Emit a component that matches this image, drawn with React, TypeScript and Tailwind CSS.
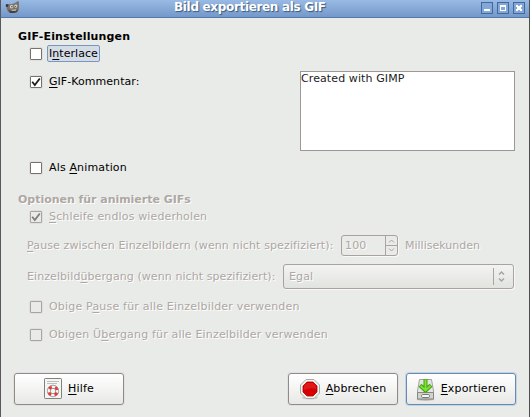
import type { ReactNode } from "react";

function Mnemonic({ children }: { children: ReactNode }) {
  return (
    <span className="underline decoration-1 underline-offset-2 [text-decoration-skip-ink:none]">
      {children}
    </span>
  );
}

function CheckBox({ checked = false, disabled = false }: { checked?: boolean; disabled?: boolean }) {
  return (
    <span
      className={
        "size-3 shrink-0 rounded-[1px] border shadow-[0_0_0_1px_#dfe0dd] " +
        (disabled ? "border-[#aaa3a0] bg-[#e9ebe8]" : "border-[#777170] bg-white")
      }
    >
      {checked && (
        <svg viewBox="0 0 10 10" className="size-2.5" fill="none">
          <path
            d="M1.2 4.8 3.8 8 8.8 1.5"
            stroke={disabled ? "#807b79" : "#1c1c1c"}
            strokeWidth="1.8"
          />
        </svg>
      )}
    </span>
  );
}

function CheckRow({
  checked,
  disabled,
  className,
  children,
}: {
  checked?: boolean;
  disabled?: boolean;
  className: string;
  children: ReactNode;
}) {
  return (
    <label className={"flex items-center gap-[7px] pl-[29px] " + className}>
      <CheckBox checked={checked} disabled={disabled} />
      <span className={disabled ? "text-[#aea7a4] [text-shadow:1px_1px_0_#fff]" : ""}>{children}</span>
    </label>
  );
}

function WindowButton({ children }: { children: ReactNode }) {
  return (
    <button className="size-3 border border-[#41699c] bg-[#83a8d8]">
      <svg viewBox="0 0 10 10" className="size-2.5" shapeRendering="crispEdges">
        {children}
      </svg>
    </button>
  );
}

function MascotIcon() {
  return (
    <svg viewBox="0 0 15 14" className="h-3.5 w-[15px]">
      <path d="M1.2 4 4 4 6 4.3 10 3 12.5 1.2 14 1.5 14 9 12.5 12 9 13H5L2.5 11 1.5 8Z" fill="#77756e" />
      <path d="M3 9.5 6 11H11L13 9 12 12 9 13H5Z" fill="#45423c" />
      <path d="M6.5 10 11 9.3 11 10.6 7.5 11Z" fill="#c9c2b4" />
      <ellipse cx="6.6" cy="6.7" rx="1.7" ry="1.7" fill="#dddcd4" />
      <ellipse cx="10.8" cy="6.1" rx="1.5" ry="1.6" fill="#dddcd4" />
      <circle cx="6.9" cy="6.8" r=".7" fill="#35332e" />
      <circle cx="10.7" cy="6.3" r=".6" fill="#35332e" />
      <circle cx="2" cy="5.6" r="1.3" fill="#35332e" />
    </svg>
  );
}

function HelpIcon() {
  return (
    <svg viewBox="0 0 18 22" className="h-[22px] w-[18px]">
      <rect x=".5" y=".5" width="17" height="20" rx=".7" fill="#f5f6f3" stroke="#80827e" />
      <path d="M3 3.5H15M3 5.5H13" stroke="#bec0bb" />
      <circle cx="9" cy="13" r="4.2" fill="none" stroke="#8a8c88" strokeWidth="3.9" />
      <circle cx="9" cy="13" r="4.2" fill="none" stroke="#f4f4f2" strokeWidth="2.5" />
      <circle
        cx="9"
        cy="13"
        r="4.2"
        fill="none"
        stroke="#e23a3a"
        strokeWidth="2.8"
        strokeDasharray="3.1 3.497"
        strokeDashoffset="-1.75"
      />
    </svg>
  );
}

function StopIcon() {
  return (
    <svg viewBox="0 0 20 21" className="h-[21px] w-5">
      <ellipse cx="10" cy="18.8" rx="8" ry="1.7" fill="#c9cbc7" />
      <path d="M6 .5H14L19.5 6V14L14 19.5H6L.5 14V6Z" fill="#f3f4f1" stroke="#a7aaa4" />
      <path d="M7 3H13L17 7V13L13 17H7L3 13V7Z" fill="#d60000" stroke="#b00000" strokeWidth=".8" />
      <path d="M7 4H13L16 7V10Q10 8 4 11V7Z" fill="#e01a1a" />
    </svg>
  );
}

function SaveIcon() {
  return (
    <svg viewBox="0 0 19 23" className="h-[23px] w-[19px]">
      <ellipse cx="9.5" cy="21.5" rx="9" ry="1.2" fill="#aeb0ab" />
      <path d="M3.5 1.5H15.5L17.5 13V20.5H1.5V13Z" fill="#e3e5e1" stroke="#a0a39d" />
      <path d="M1.5 14.5H17.5V21H1.5Z" fill="#d0d2cd" stroke="#858883" />
      <rect x="5.5" y="16.5" width="8" height="3" rx="1.2" fill="#f6f6f5" stroke="#777a74" />
      <path
        d="M9.5 1V12M4 7.2 9.5 12.5 15 7.2"
        fill="none"
        stroke="#479b10"
        strokeWidth="4"
        strokeLinejoin="round"
      />
      <path d="M9.5 1.5V12M4.5 7.8 9.5 12.4 14.5 7.8" fill="none" stroke="#7be335" strokeWidth="2" />
    </svg>
  );
}

function ActionButton({
  icon,
  primary = false,
  children,
}: {
  icon: ReactNode;
  primary?: boolean;
  children: ReactNode;
}) {
  return (
    <button
      className={
        "flex h-8 w-[110px] items-center justify-center gap-1.5 rounded-[3px] border bg-linear-to-b from-white to-[#e8e9e6] " +
        (primary
          ? "border-[#6689b7] shadow-[0_0_0_1px_#c5d2e3]"
          : "border-[#938989] shadow-[0_0_0_1px_#e0e2df]")
      }
    >
      {icon}
      <span>{children}</span>
    </button>
  );
}

const disabledText = "text-[#aea7a4] [text-shadow:1px_1px_0_#fff]";

export default function App() {
  return (
    <div className="flex h-[417px] w-[530px] flex-col overflow-hidden border-x border-l-[#59585e] border-r-[#4e504f] bg-[#e9ebe8] font-['DejaVu_Sans',sans-serif] text-[11px] leading-[14px] tracking-[0.15px] whitespace-nowrap text-black">
      <header className="flex h-[18px] shrink-0 items-start border-b border-[#5277aa] bg-linear-to-b from-[#99bae4] to-[#7498ca] pl-1">
        <MascotIcon />
        <h1 className="flex-1 pl-[154px] text-[12px] leading-[15px] font-bold tracking-[-0.33px] text-white [text-shadow:1px_1px_1px_#35577f]">
          Bild exportieren als GIF
        </h1>
        <div className="flex gap-1 pt-0.5 pr-1">
          <WindowButton>
            <path d="M2 6H8V8H2Z" fill="white" />
          </WindowButton>
          <WindowButton>
            <path d="M2 2H8V8H2Z M3 4V7H7V4Z" fill="white" fillRule="evenodd" />
          </WindowButton>
          <WindowButton>
            <path d="M2 2H4V3H6V2H8V4H7V6H8V8H6V7H4V8H2V6H3V4H2Z" fill="white" />
          </WindowButton>
        </div>
      </header>

      <main className="flex min-h-0 flex-1 flex-col">
        <h2 className="mt-3 h-[14px] pl-[17px] font-bold">GIF-Einstellungen</h2>
        <label className="mt-[2px] flex h-[15px] items-center gap-[5px] pl-[29px]">
          <CheckBox />
          <span className="flex h-[17px] w-[53px] items-center rounded-[2px] border border-[#7897bf] bg-[#d6dce6] pl-[1px] tracking-[0.05px]">
            <span>I<Mnemonic>n</Mnemonic>terlace</span>
          </span>
        </label>

        <div className="mt-[10px] flex h-20 justify-between pr-[14px]">
          <CheckRow checked className="h-[21px] tracking-[0.05px]">
            <Mnemonic>G</Mnemonic>IF-Kommentar:
          </CheckRow>
          <div className="w-[215px] border border-[#9e9794] bg-white tracking-[0.1px] text-[#222]">
            Created with GIMP
          </div>
        </div>

        <CheckRow className="mt-[9px] h-4">
          Als <Mnemonic>A</Mnemonic>nimation
        </CheckRow>

        <h2 className={"mt-[17px] h-[14px] pl-[17px] font-bold tracking-[-0.03px] " + disabledText}>
          Optionen für animierte GIFs
        </h2>
        <CheckRow checked disabled className="mt-[2px] h-4">
          <Mnemonic>S</Mnemonic>chleife endlos wiederholen
        </CheckRow>

        <div className={"mt-[10px] flex h-[21px] items-center pl-[26px] " + disabledText}>
          <span className="w-[314px] tracking-[0.12px]">
            <Mnemonic>P</Mnemonic>ause zwischen Einzelbildern (wenn nicht spezifiziert):
          </span>
          <div className="flex h-[21px] w-[57px] rounded-[3px] border border-[#aaa2a0] shadow-[1px_1px_0_#f8f9f7]">
            <span className="flex flex-1 items-center pl-[3px]">100</span>
            <svg viewBox="0 0 12 19" className="h-[19px] w-3" fill="none" stroke="#aaa3a0">
              <path d="M.5 0V19M1 9.5H12M4 6.5 6.5 4 9 6.5M4 12.5 6.5 15 9 12.5" />
            </svg>
          </div>
          <span className="ml-[7px] tracking-normal">Millisekunden</span>
        </div>

        <div className={"mt-2 flex h-[25px] items-center pl-[26px] " + disabledText}>
          <span className="w-[256px] tracking-[0.08px]">
            Einzelbild<Mnemonic>ü</Mnemonic>bergang (wenn nicht spezifiziert):
          </span>
          <div className="flex h-[25px] w-[231px] items-center rounded-[3px] border border-[#aaa2a0] bg-linear-to-b from-[#f3f4f2] to-[#e1e3df] pl-[5px] shadow-[1px_1px_0_#f8f9f7]">
            <span className="flex-1">Egal</span>
            <svg viewBox="0 0 20 23" className="h-[23px] w-5" fill="none" stroke="#aaa3a0">
              <path d="M.5 3V20" />
              <path d="M6 9.5 8.5 7 11 9.5M6 13.5 8.5 16 11 13.5" strokeWidth="1.5" />
            </svg>
          </div>
        </div>

        <CheckRow disabled className="mt-[10px] h-4 tracking-[0.19px]">
          Obige P<Mnemonic>a</Mnemonic>use für alle Einzelbilder verwenden
        </CheckRow>
        <CheckRow disabled className="mt-3 h-4 tracking-[0.17px]">
          Obigen Ü<Mnemonic>b</Mnemonic>ergang für alle Einzelbilder verwenden
        </CheckRow>

        <footer className="mt-[30px] flex gap-2 pr-[13px] pl-[13px]">
          <ActionButton icon={<HelpIcon />}>
            <Mnemonic>H</Mnemonic>ilfe
          </ActionButton>
          <div className="flex-1" />
          <ActionButton icon={<StopIcon />}>
            <Mnemonic>A</Mnemonic>bbrechen
          </ActionButton>
          <ActionButton primary icon={<SaveIcon />}>
            <Mnemonic>E</Mnemonic>xportieren
          </ActionButton>
        </footer>
      </main>
    </div>
  );
}
